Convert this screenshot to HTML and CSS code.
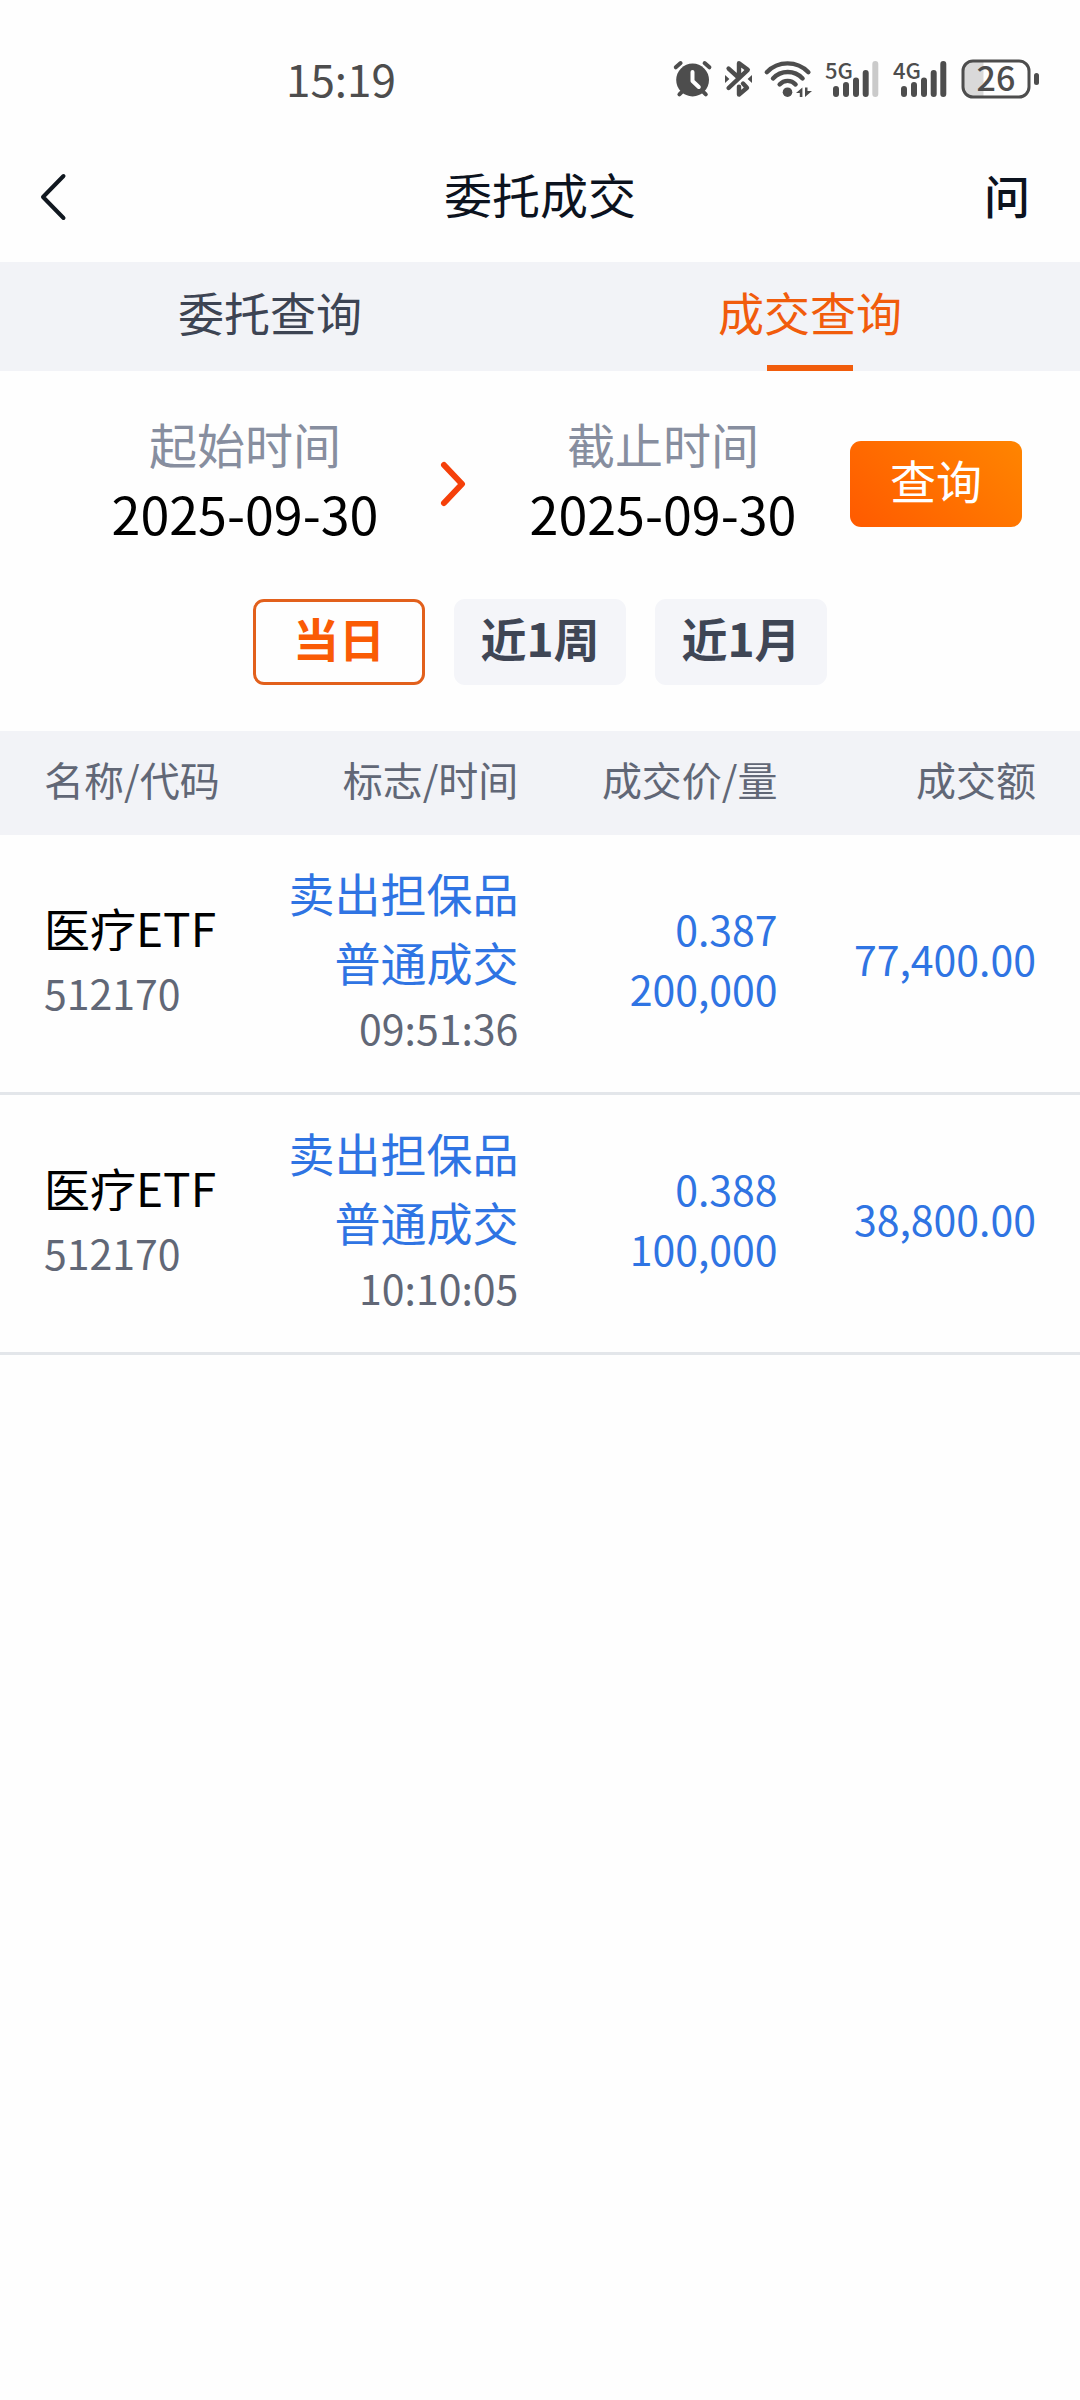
FILE: index.html
```html
<!DOCTYPE html>
<html lang="zh-CN">
<head>
<meta charset="utf-8">
<meta name="viewport" content="width=device-width, initial-scale=1">
<title>委托成交</title>
<link rel="stylesheet" href="styles.css">
</head>
<body>
<div class="status-bar">
  <time class="clock">15:19</time>
  <div class="status-icons">
    <svg width="40" height="40" viewBox="0 0 40 40" role="img" aria-label="闹钟">
      <g stroke="#4d4d4d" stroke-width="4" stroke-linecap="round" fill="none">
        <path d="M2.8 8.3 7.6 4M31.6 4l4.8 4.3M6.4 35.3l4-4M32.8 35.3l-4-4"/>
      </g>
      <circle cx="19.6" cy="21" r="16.4" fill="#4d4d4d"/>
      <path d="M19.5 13v9l6.3 6" stroke="#fff" stroke-width="4" stroke-linecap="round" stroke-linejoin="round" fill="none"/>
    </svg>
    <svg width="27" height="40" viewBox="0 0 27 40" role="img" aria-label="蓝牙">
      <g stroke="#4d4d4d" stroke-width="4.4" stroke-linecap="round" stroke-linejoin="round" fill="none">
        <path d="M3.6 9.6 14 19V4.2l8.800 6.600L3.600 29"/>
        <path d="M14 27.600v8l8-6.800-4-4.300"/>
      </g>
      <path d="M0 16v8l4.400-4zM27 16v8l-4.400-4z" fill="#4d4d4d"/>
    </svg>
    <svg width="48" height="40" viewBox="0 0 48 40" role="img" aria-label="无线网络">
      <g stroke="#4d4d4d" stroke-width="4.4" stroke-linecap="round" fill="none">
        <path d="M2.8 13.2C14 1.4 33 1.4 44.4 13.2"/>
        <path d="M9 19.4C17 10.8 30.5 10.8 38.6 19.4"/>
        <path d="M15.6 25.4C20 20.7 27.3 20.7 31.6 25.4"/>
      </g>
      <circle cx="23.5" cy="33.2" r="4.8" fill="#4d4d4d"/>
      <path d="M32 34l6.4-5.5V38h-2.6v-4zM41 28.5h2.5V32H48l-7 6z" fill="#4d4d4d"/>
    </svg>
    <svg width="56" height="40" viewBox="0 0 56 40" role="img" aria-label="5G 信号">
      <text class="network" x="1" y="20">5G</text>
      <g stroke="#4d4d4d" stroke-width="6" stroke-linecap="round">
        <path d="M12 30v5M22 26V35M32 21.500V35M41.700 14V35"/>
        <path d="M51.300 5V35" stroke="#cacaca"/>
      </g>
    </svg>
    <svg width="56" height="40" viewBox="0 0 56 40" role="img" aria-label="4G 信号">
      <text class="network" x="1" y="20">4G</text>
      <path d="M12 30v5M22 26V35M32 21.500V35M41.700 14V35M51.300 5V35" stroke="#4d4d4d" stroke-width="6" stroke-linecap="round"/>
    </svg>
    <svg width="79" height="40" viewBox="0 0 79 40" role="img" aria-label="电量 26%">
      <path d="M23.500 2H12Q3 2 3 12v16q0 10 9 10h11.500z" fill="#d9d9d9"/>
      <rect x="3" y="2" width="66" height="36" rx="10" fill="none" stroke="#4d4d4d" stroke-width="3"/>
      <rect x="74" y="14" width="5" height="12" rx="2.500" fill="#4d4d4d"/>
      <text class="charge" x="36" y="32">26</text>
    </svg>
  </div>
</div>

<header class="title-bar">
  <button class="bar-button" type="button" aria-label="返回">
    <svg width="26" height="48" viewBox="0 0 26 48"><path d="M23.500 4 3 25l20.500 21" fill="none" stroke="#111820" stroke-width="4" stroke-linecap="round" stroke-linejoin="round"/></svg>
  </button>
  <h1 class="title">委托成交</h1>
  <button class="bar-button ask" type="button">问</button>
</header>

<nav class="tabs">
  <button class="tab" type="button">委托查询</button>
  <button class="tab active" type="button" aria-current="page">成交查询</button>
</nav>

<main>
  <form class="filter">
    <div class="range-row">
      <div class="range">
        <div class="field">
          <label for="start">起始时间</label>
          <input id="start" type="text" value="2025-09-30" readonly>
        </div>
        <svg class="arrow" width="44" height="46" viewBox="0 0 44 46" aria-hidden="true"><path d="M12 4l18 19-18 19" fill="none" stroke="#f5400a" stroke-width="6" stroke-linecap="round" stroke-linejoin="round"/></svg>
        <div class="field">
          <label for="end">截止时间</label>
          <input id="end" type="text" value="2025-09-30" readonly>
        </div>
      </div>
      <button class="box-button query" type="button">查询</button>
    </div>
    <div class="presets">
      <button class="box-button preset selected" type="button" aria-pressed="true">当日</button>
      <button class="box-button preset" type="button" aria-pressed="false">近1周</button>
      <button class="box-button preset" type="button" aria-pressed="false">近1月</button>
    </div>
  </form>

  <table class="deals">
    <thead>
      <tr><th scope="col">名称/代码</th><th scope="col">标志/时间</th><th scope="col">成交价/量</th><th scope="col">成交额</th></tr>
    </thead>
    <tbody>
      <tr>
        <td><div class="name">医疗ETF</div><div class="code">512170</div></td>
        <td><div class="flag">卖出担保品</div><div class="flag">普通成交</div><div class="code">09:51:36</div></td>
        <td><div class="figure">0.387</div><div class="figure">200,000</div></td>
        <td><div class="figure">77,400.00</div></td>
      </tr>
      <tr>
        <td><div class="name">医疗ETF</div><div class="code">512170</div></td>
        <td><div class="flag">卖出担保品</div><div class="flag">普通成交</div><div class="code">10:10:05</div></td>
        <td><div class="figure">0.388</div><div class="figure">100,000</div></td>
        <td><div class="figure">38,800.00</div></td>
      </tr>
    </tbody>
  </table>
</main>
</body>
</html>
```
FILE: styles.css
```css
* {
  box-sizing: border-box;
}

body {
  margin: 0;
  background: #fefefe;
  color: #000;
  font-family: "Noto Sans CJK SC", sans-serif;
}

button,
input {
  margin: 0;
  padding: 0;
  border: 0;
  background: none;
  color: inherit;
  font: inherit;
}

svg {
  display: block;
  overflow: visible;
}

/* Status bar */
.status-bar {
  display: flex;
  justify-content: space-between;
  padding: 59px 41px 31px 286px;
}

.clock {
  color: #4d4d4d;
  font-size: 44px;
  line-height: 38px;
}

.status-icons {
  display: flex;
  gap: 12px;
}

.network,
.charge {
  fill: #4d4d4d;
  font-weight: 500;
}

.network {
  font-size: 22px;
}

.charge {
  font-size: 34px;
  text-anchor: middle;
}

/* Title bar */
.title-bar {
  display: flex;
  align-items: center;
  justify-content: space-between;
  height: 132px;
  padding: 0 40px;
}

.bar-button {
  width: 56px;
  text-align: left;
}

.title {
  margin: 0;
  padding-bottom: 6px;
  color: #0c131e;
  font-size: 48px;
  font-weight: 400;
  line-height: 66px;
}

.ask {
  padding-bottom: 4px;
  color: #0c131e;
  font-size: 46px;
  font-weight: 500;
  line-height: 66px;
}

/* Tabs */
.tabs {
  display: flex;
  background: #f2f3f7;
}

.tab {
  position: relative;
  flex: 1;
  height: 109px;
  padding-bottom: 12px;
  color: #3d4453;
  font-size: 46px;
}

.tab.active {
  color: #f15c0c;
}

.tab.active::after {
  content: "";
  position: absolute;
  bottom: 0;
  left: 50%;
  width: 86px;
  height: 6px;
  margin-left: -43px;
  background: #f15c0c;
}

/* Date filter */
.filter {
  padding: 37px 58px 46px;
}

.range-row,
.range {
  display: flex;
  align-items: center;
}

.range {
  flex: 1;
}

.field {
  display: flex;
  flex: 1;
  flex-direction: column;
  min-width: 0;
  padding-bottom: 12px;
  text-align: center;
}

.field label {
  color: #878e9f;
  font-size: 48px;
  line-height: 70px;
}

.field input {
  width: 100%;
  height: 70px;
  font-size: 52px;
  line-height: 70px;
  text-align: center;
}

.box-button {
  width: 172px;
  height: 86px;
  padding-bottom: 10px;
  border-radius: 11px;
  font-size: 46px;
  line-height: 66px;
}

.query {
  background: linear-gradient(45deg, #ff5a00, #ff8500);
  color: #fff;
}

.presets {
  display: flex;
  justify-content: center;
  gap: 29px;
  margin-top: 39px;
}

.preset {
  background: #f4f5f9;
  color: #3f4655;
  font-weight: 700;
}

.preset.selected {
  border: 3px solid #e2601c;
  background: #fefefe;
  color: #fa5b05;
}

/* Deals */
.deals {
  width: 100%;
  border-collapse: collapse;
  table-layout: fixed;
}

th,
td {
  width: 24%;
  padding: 0;
  text-align: right;
}

th:first-child,
td:first-child {
  padding-left: 44px;
  text-align: left;
}

th:last-child,
td:last-child {
  width: 28%;
  padding-right: 44px;
}

th {
  height: 104px;
  padding-bottom: 8px;
  background: #f2f3f7;
  color: #616776;
  font-size: 40px;
  font-weight: 400;
}

td {
  padding: 23px 0 34px;
  vertical-align: middle;
}

tbody tr {
  border-bottom: 3px solid #e3e6ea;
}

.name {
  font-size: 46px;
  line-height: 68px;
}

.code {
  color: #616776;
  font-size: 41px;
  line-height: 62px;
}

.flag {
  color: #2f74e3;
  font-size: 46px;
  line-height: 69px;
}

.figure {
  color: #2f74e3;
  font-size: 41px;
  line-height: 60px;
}
```
